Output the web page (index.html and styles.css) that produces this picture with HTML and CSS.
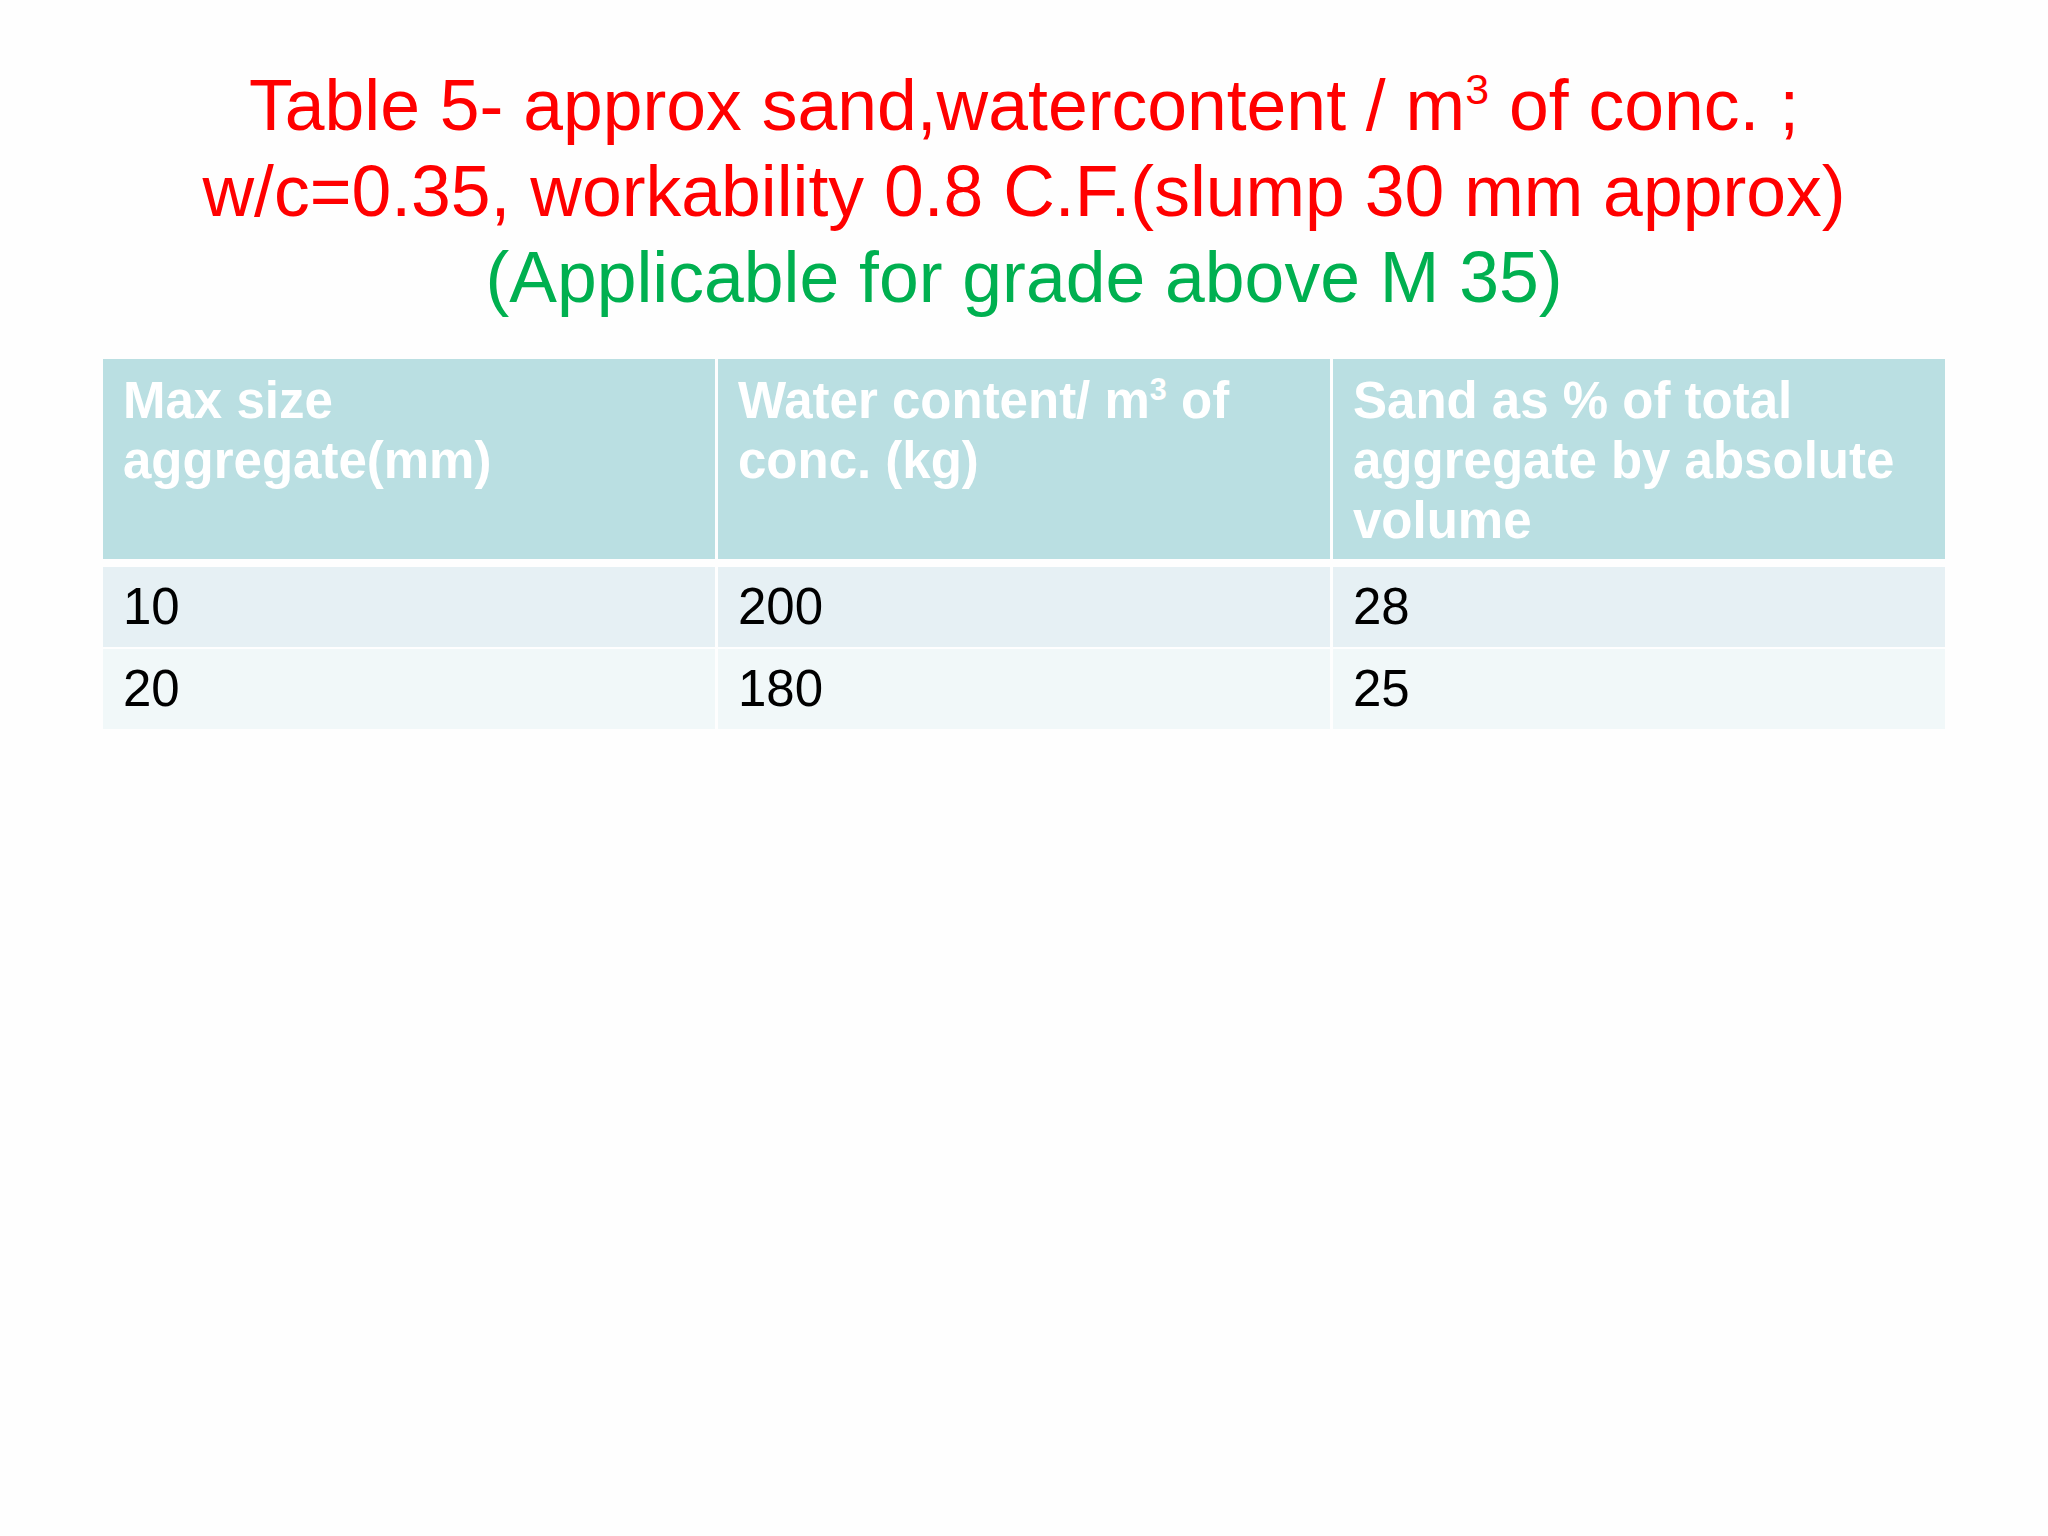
FILE: index.html
```html
<!DOCTYPE html>
<html lang="en">
<head>
<meta charset="utf-8">
<title>Table 5</title>
<link rel="stylesheet" href="styles.css">
</head>
<body>
<main class="slide">
  <h1 class="title">
    <span class="title-red">Table 5- approx sand,watercontent / m<sup class="sup">3</sup> of conc. ;<br>w/c=0.35, workability 0.8 C.F.(slump 30 mm approx)</span><br>
    <span class="title-green">(Applicable for grade above M 35)</span>
  </h1>
  <div class="table">
    <div class="row row-head">
      <div class="cell">Max size aggregate(mm)</div>
      <div class="cell">Water content/ m<sup class="sup">3</sup> of conc. (kg)</div>
      <div class="cell">Sand as % of total aggregate by absolute volume</div>
    </div>
    <div class="row row-odd">
      <div class="cell">10</div>
      <div class="cell">200</div>
      <div class="cell">28</div>
    </div>
    <div class="row row-even">
      <div class="cell">20</div>
      <div class="cell">180</div>
      <div class="cell">25</div>
    </div>
  </div>
</main>
</body>
</html>
```

FILE: styles.css
```css
html, body {
  margin: 0;
  padding: 0;
  background: #ffffff;
}

.slide {
  width: 2048px;
  height: 1536px;
  background: #fefefe;
  font-family: "Liberation Sans", Arial, sans-serif;
  padding-top: 62px;
  box-sizing: border-box;
  overflow: hidden;
}

.title {
  margin: 0;
  text-align: center;
  font-size: 71.5px;
  font-weight: normal;
  line-height: 86px;
}

.title-red {
  color: #ff0000;
}

.title-green {
  color: #00b050;
}

.sup {
  font-size: 0.6em;
  line-height: 0;
  vertical-align: 0.6em;
}

.table {
  margin: 39px 0 0 103px;
  width: 1842px;
  display: flex;
  flex-direction: column;
}

.row {
  display: grid;
  grid-template-columns: 1fr 1fr 1fr;
  column-gap: 3px;
}

.row-head {
  margin-bottom: 8px;
}

.row-odd {
  margin-bottom: 2px;
}

.cell {
  padding: 10px 20px;
  font-size: 51px;
  line-height: 60px;
  color: #000000;
}

.row-head .cell {
  background: #badfe2;
  color: #ffffff;
  font-weight: bold;
  padding-top: 12px;
  padding-bottom: 8px;
  height: 180px;
}

.row-odd .cell {
  background: #e6f0f4;
}

.row-even .cell {
  background: #f1f8f9;
}
```
